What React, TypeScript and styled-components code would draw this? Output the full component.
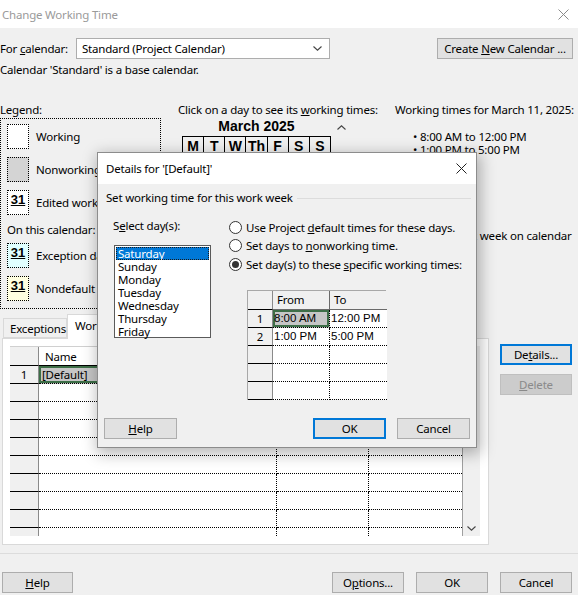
import React from "react";
import styled, { createGlobalStyle, css } from "styled-components";

const UI = `"Noto Sans", "Liberation Sans", sans-serif`;
const ARIAL = `"Liberation Sans", Arial, sans-serif`;
const LS = "-0.2px";

const GlobalStyle = createGlobalStyle`
  html, body { margin: 0; padding: 0; background: #f0f0f0; }
  *, *::before, *::after { box-sizing: border-box; }
  body { font-family: ${UI}; font-size: 11.5px; letter-spacing: ${LS}; color: #000; }
`;

const Window = styled.div`
  position: relative;
  width: 578px;
  height: 595px;
  overflow: hidden;
  background: #f0f0f0;
  display: flex;
  flex-direction: column;
`;

const TitleBar = styled.div<{ $h: number; $dark?: boolean; $pl: number }>`
  flex: none;
  height: ${(p) => p.$h}px;
  background: #fff;
  display: flex;
  align-items: center;
  justify-content: space-between;
  padding: 0 9px 0 ${(p) => p.$pl}px;
  color: ${(p) => (p.$dark ? "#000" : "#9a9a9a")};
`;

const CloseIcon = ({ color }: { color: string }) => (
  <svg width="11" height="11" viewBox="0 0 11 11">
    <path d="M0.5 0.5 L10.5 10.5 M10.5 0.5 L0.5 10.5" stroke={color} strokeWidth="1" fill="none" />
  </svg>
);

const Button = styled.button<{ $w: number; $focus?: boolean }>`
  flex: none;
  width: ${(p) => p.$w}px;
  height: 21px;
  padding: 0;
  font-family: ${UI};
  font-size: 11.5px;
  letter-spacing: ${LS};
  color: #000;
  background: #e1e1e1;
  border: 1px solid #adadad;
  ${(p) =>
    p.$focus &&
    css`
      border: 2px solid #0078d7;
    `}
  &:disabled {
    background: #cccccc;
    border-color: #bfbfbf;
    color: #8a8a8a;
  }
`;

const CalendarRow = styled.div`
  flex: none;
  margin-top: 10px;
  height: 21px;
  display: flex;
  align-items: center;
  padding-right: 5px;
`;

const FieldLabel = styled.div`
  width: 76px;
  flex: none;
`;

const Combo = styled.div`
  width: 254px;
  height: 21px;
  background: #fff;
  border: 1px solid #adadad;
  display: flex;
  align-items: center;
  justify-content: space-between;
  padding: 0 7px 0 5px;
`;

const Chevron = ({ up }: { up?: boolean }) => (
  <svg width="9" height="5" viewBox="0 0 9 5">
    <path d={up ? "M0.5 4.5 L4.5 0.8 L8.5 4.5" : "M0.5 0.5 L4.5 4.2 L8.5 0.5"} stroke="#444" strokeWidth="1.1" fill="none" />
  </svg>
);

const RightButton = styled.div`
  margin-left: auto;
`;

const InfoLine = styled.div`
  flex: none;
  margin-top: 3px;
  line-height: 16px;
`;

const Middle = styled.div`
  flex: none;
  margin-top: 24px;
  height: 212px;
  display: grid;
  grid-template-columns: 178px 217px 1fr;
`;

const Caption = styled.div`
  line-height: 16px;
  white-space: nowrap;
`;

const LegendBox = styled.div`
  width: 161px;
  height: 191px;
  border: 1px dotted #000;
  padding: 5px 0 0 6px;
  display: flex;
  flex-direction: column;
`;

const LegendItem = styled.div<{ $mt: number }>`
  display: flex;
  align-items: center;
  gap: 7px;
  margin-top: ${(p) => p.$mt}px;
  white-space: nowrap;
`;

const Swatch = styled.div<{ $bg: string }>`
  width: 22px;
  height: 25px;
  flex: none;
  border: 1px dotted #000;
  background: ${(p) => p.$bg};
  display: flex;
  justify-content: center;
  align-items: flex-start;
  padding-top: 1px;
  font-family: ${ARIAL};
  font-weight: bold;
  font-size: 13px;
  letter-spacing: 0;
  text-decoration: underline;
`;

const LegendSub = styled.div`
  margin-top: 7px;
  line-height: 16px;
`;

const CalWrap = styled.div`
  margin-left: 4px;
  display: grid;
  grid-template-columns: 149px 18px;
  align-items: center;
`;

const CalTitle = styled.div`
  text-align: center;
  font-family: ${ARIAL};
  font-weight: bold;
  font-size: 14px;
  letter-spacing: 0;
  line-height: 16px;
`;

const ArrowCell = styled.div`
  display: flex;
  justify-content: center;
  padding-left: 2px;
  padding-top: 2px;
`;

const CalTable = styled.table`
  grid-column: 1;
  margin-top: 2px;
  border-collapse: collapse;
  width: 149px;
  table-layout: fixed;
  font-family: ${ARIAL};
  letter-spacing: 0;
  background: #fff;
`;

const CalHead = styled.th`
  border: 1px solid #000;
  height: 18px;
  padding: 0;
  font-size: 14px;
  font-weight: bold;
  background: #f0f0f0;
`;

const CalDay = styled.td<{ $off?: boolean }>`
  border: 1px solid #000;
  height: 18px;
  padding: 0;
  background: ${(p) => (p.$off ? "#d4d4d4" : "#fff")};
`;

const Bullets = styled.div`
  padding-left: 18px;
  margin-top: 12px;
  line-height: 13px;
  white-space: nowrap;
`;

const BasedText = styled.div`
  margin-top: 71px;
  padding-left: 15px;
  line-height: 17px;
  width: 183px;
`;

const TabsSection = styled.div`
  flex: none;
  height: 231px;
  display: flex;
`;

const TabArea = styled.div`
  width: 487px;
  margin-left: 2px;
  display: flex;
  flex-direction: column;
`;

const TabStrip = styled.div`
  height: 24px;
  display: flex;
  align-items: flex-end;
  padding-left: 1px;
  position: relative;
  z-index: 1;
`;

const Tab = styled.div<{ $active?: boolean; $w: number }>`
  width: ${(p) => p.$w}px;
  height: ${(p) => (p.$active ? 25 : 20)}px;
  margin-bottom: ${(p) => (p.$active ? -1 : 0)}px;
  border: 1px solid #d9d9d9;
  border-bottom: ${(p) => (p.$active ? "none" : "1px solid #d9d9d9")};
  background: ${(p) => (p.$active ? "#fff" : "#f0f0f0")};
  display: flex;
  align-items: center;
  padding-left: ${(p) => (p.$active ? 7 : 6)}px;
  padding-bottom: ${(p) => (p.$active ? 3 : 0)}px;
  white-space: nowrap;
`;

const Panel = styled.div`
  flex: 1;
  background: #fff;
  border: 1px solid #d9d9d9;
  padding: 7px 7px 0 7px;
`;

const GridWrap = styled.div`
  display: flex;
  height: 190px;
  overflow: hidden;
`;

const Grid = styled.div`
  display: grid;
  grid-template-columns: 29px 238px 92px 93px;
  grid-auto-rows: 18px;
  grid-template-rows: 19px;
  align-content: start;
  border-top: 1px solid #d0d0d0;
`;

const RowHead = styled.div`
  background: #f0f0f0;
  border-right: 1px solid #8a8a8a;
  border-bottom: 1px solid #000;
  display: flex;
  align-items: center;
  justify-content: center;
`;

const Cell = styled.div<{ $head?: boolean; $sel?: boolean; $last?: boolean }>`
  border-bottom: ${(p) => (p.$head ? "1px solid #000" : "1px dotted #000")};
  border-right: ${(p) => (p.$last ? "none" : p.$head ? "1px solid #8a8a8a" : "1px dotted #000")};
  display: flex;
  align-items: center;
  padding-left: ${(p) => (p.$head ? 6 : 3)}px;
  white-space: nowrap;
  overflow: hidden;
  ${(p) =>
    p.$sel &&
    css`
      background: #c6c6c6;
      box-shadow: inset 0 0 0 2px #3d6e47;
    `}
`;

const ScrollCol = styled.div`
  width: 18px;
  border-left: 1px solid #a0a0a0;
  background: #f0f0f0;
  display: flex;
  flex-direction: column;
  justify-content: flex-end;
  align-items: center;
  padding-bottom: 5px;
`;

const SideButtons = styled.div`
  margin-left: 11px;
  padding-top: 30px;
  display: flex;
  flex-direction: column;
  gap: 9px;
`;

const Separator = styled.div`
  flex: none;
  margin-top: 8px;
  height: 1px;
  background: #dcdcdc;
`;

const Footer = styled.div`
  flex: none;
  margin-top: 18px;
  display: flex;
  gap: 12px;
  padding: 0 6px 0 2px;
`;

const FooterRight = styled.div`
  margin-left: auto;
  display: flex;
  gap: 12px;
`;

/* ---------- Dialog ---------- */

const Dialog = styled.div`
  position: absolute;
  left: 97px;
  top: 152px;
  width: 380px;
  height: 296px;
  background: #f0f0f0;
  border: 1px solid #8c8c8c;
  box-shadow: 2px 4px 14px 2px rgba(0, 0, 0, 0.28);
  display: flex;
  flex-direction: column;
  z-index: 5;
`;

const GroupHeader = styled.div`
  margin-top: 6px;
  padding: 0 5px 0 8px;
  display: flex;
  align-items: center;
  gap: 4px;
  line-height: 16px;
  white-space: nowrap;
`;

const GroupLine = styled.div`
  flex: 1;
  height: 1px;
  background: #dcdcdc;
`;

const DialogContent = styled.div`
  display: grid;
  grid-template-columns: 116px 1fr;
  padding-left: 15px;
  margin-top: 12px;
`;

const DayCol = styled.div`
  display: flex;
  flex-direction: column;
`;

const DayList = styled.div`
  margin-top: 11px;
  margin-left: 1px;
  width: 97px;
  height: 93px;
  background: #fff;
  border: 1px solid #5a5a5a;
  padding: 1px;
  display: flex;
  flex-direction: column;
`;

const DayItem = styled.div<{ $sel?: boolean }>`
  line-height: 13px;
  height: 13px;
  padding-left: 2px;
  ${(p) =>
    p.$sel &&
    css`
      background: #0078d7;
      color: #fff;
      outline: 1px dotted #1a1a1a;
      outline-offset: -1px;
    `}
`;

const OptCol = styled.div`
  display: flex;
  flex-direction: column;
`;

const RadioRow = styled.div`
  height: 18.5px;
  display: flex;
  align-items: center;
  gap: 4px;
  white-space: nowrap;
`;

const RadioDot = styled.span<{ $on?: boolean }>`
  width: 13px;
  height: 13px;
  flex: none;
  border-radius: 50%;
  border: 1px solid #333;
  background: #fff;
  display: flex;
  align-items: center;
  justify-content: center;
  &::after {
    content: "";
    width: 7px;
    height: 7px;
    border-radius: 50%;
    background: ${(p) => (p.$on ? "#333" : "transparent")};
  }
`;

const TimeTable = styled.div`
  margin-top: 16px;
  margin-left: 18px;
  width: 139px;
  display: grid;
  grid-template-columns: 25px 57px 57px;
  grid-template-rows: 19px;
  grid-auto-rows: 18px;
  border-top: 1px solid #a8a8a8;
  border-left: 1px solid #a8a8a8;
  border-right: 1px solid #a8a8a8;
`;

const TRowHead = styled.div`
  border-right: 1px solid #8a8a8a;
  border-bottom: 1px solid #000;
  display: flex;
  align-items: center;
  justify-content: center;
`;

const TCell = styled.div<{ $head?: boolean; $sel?: boolean; $last?: boolean }>`
  border-bottom: ${(p) => (p.$head ? "1px solid #6a6a6a" : "1px dotted #000")};
  border-right: ${(p) => (p.$last ? "none" : p.$head ? "1px solid #6a6a6a" : "1px dotted #000")};
  background: ${(p) => (p.$head ? "#f0f0f0" : "#fff")};
  display: flex;
  align-items: center;
  padding-left: ${(p) => (p.$head ? 4 : 1)}px;
  font-family: ${(p) => (p.$head ? UI : ARIAL)};
  letter-spacing: ${(p) => (p.$head ? LS : "0")};
  white-space: nowrap;
  ${(p) =>
    p.$sel &&
    css`
      background: #c6c6c6;
      box-shadow: inset 0 0 0 2px #3d6e47;
    `}
`;

const DialogFooter = styled.div`
  margin-top: auto;
  padding: 0 6px 8px 6px;
  display: flex;
  justify-content: space-between;
`;

const DialogFooterRight = styled.div`
  display: flex;
  gap: 11px;
`;

const days = ["Saturday", "Sunday", "Monday", "Tuesday", "Wednesday", "Thursday", "Friday"];

const calWeeks = [
  [0, 0, 0, 0, 0, 1, 1],
  [0, 0, 0, 0, 0, 1, 1],
  [0, 0, 0, 0, 0, 1, 1],
  [0, 0, 0, 0, 0, 1, 1],
  [0, 0, 0, 0, 0, 1, 1],
];

const times = [
  ["1", "8:00 AM", "12:00 PM"],
  ["2", "1:00 PM", "5:00 PM"],
  ["", "", ""],
  ["", "", ""],
  ["", "", ""],
];

export default function App() {
  const gridRows = Array.from({ length: 10 }, (_, i) => i);
  return (
    <>
      <GlobalStyle />
      <Window>
        <TitleBar $h={28} $pl={2}>
          <span>Change Working Time</span>
          <CloseIcon color="#8a8a8a" />
        </TitleBar>

        <CalendarRow>
          <FieldLabel>
            For <u>c</u>alendar:
          </FieldLabel>
          <Combo>
            <span>Standard (Project Calendar)</span>
            <Chevron />
          </Combo>
          <RightButton>
            <Button $w={136}>
              Create <u>N</u>ew Calendar ...
            </Button>
          </RightButton>
        </CalendarRow>

        <InfoLine>Calendar 'Standard' is a base calendar.</InfoLine>

        <Middle>
          <div>
            <Caption>Legend:</Caption>
            <LegendBox>
              <LegendItem $mt={0}>
                <Swatch $bg="#fff" />
                <span>Working</span>
              </LegendItem>
              <LegendItem $mt={8}>
                <Swatch $bg="#d4d4d4" />
                <span>Nonworking</span>
              </LegendItem>
              <LegendItem $mt={8}>
                <Swatch $bg="#fff">31</Swatch>
                <span>Edited working hours</span>
              </LegendItem>
              <LegendSub>On this calendar:</LegendSub>
              <LegendItem $mt={5}>
                <Swatch $bg="#e0ffff">31</Swatch>
                <span>Exception day</span>
              </LegendItem>
              <LegendItem $mt={8}>
                <Swatch $bg="#ffffe0">31</Swatch>
                <span>Nondefault work week</span>
              </LegendItem>
            </LegendBox>
          </div>

          <div>
            <Caption>
              Click on a day to see its <u>w</u>orking times:
            </Caption>
            <CalWrap>
              <CalTitle>March 2025</CalTitle>
              <ArrowCell>
                <Chevron up />
              </ArrowCell>
              <CalTable>
                <thead>
                  <tr>
                    {["M", "T", "W", "Th", "F", "S", "S"].map((d, i) => (
                      <CalHead key={i}>{d}</CalHead>
                    ))}
                  </tr>
                </thead>
                <tbody>
                  {calWeeks.map((w, i) => (
                    <tr key={i}>
                      {w.map((d, j) => (
                        <CalDay key={j} $off={d === 1} />
                      ))}
                    </tr>
                  ))}
                </tbody>
              </CalTable>
            </CalWrap>
          </div>

          <div>
            <Caption>Working times for March 11, 2025:</Caption>
            <Bullets>
              <div>• 8:00 AM to 12:00 PM</div>
              <div>• 1:00 PM to 5:00 PM</div>
            </Bullets>
            <BasedText>Default work week on calendar 'Standard'.</BasedText>
          </div>
        </Middle>

        <TabsSection>
          <TabArea>
            <TabStrip>
              <Tab $w={64}>Exceptions</Tab>
              <Tab $w={76} $active>
                Work Weeks
              </Tab>
            </TabStrip>
            <Panel>
              <GridWrap>
                <Grid>
                  <RowHead />
                  <Cell $head>Name</Cell>
                  <Cell $head />
                  <Cell $head $last />
                  {gridRows.map((i) => (
                    <React.Fragment key={i}>
                      <RowHead>{i === 0 ? "1" : ""}</RowHead>
                      <Cell $sel={i === 0}>{i === 0 ? "[Default]" : ""}</Cell>
                      <Cell />
                      <Cell $last />
                    </React.Fragment>
                  ))}
                </Grid>
                <ScrollCol>
                  <Chevron />
                </ScrollCol>
              </GridWrap>
            </Panel>
          </TabArea>
          <SideButtons>
            <Button $w={72} $focus>
              De<u>t</u>ails...
            </Button>
            <Button $w={72} disabled>
              <u>D</u>elete
            </Button>
          </SideButtons>
        </TabsSection>

        <Separator />

        <Footer>
          <Button $w={71}>
            <u>H</u>elp
          </Button>
          <FooterRight>
            <Button $w={72}>
              O<u>p</u>tions...
            </Button>
            <Button $w={72}>OK</Button>
            <Button $w={72}>Cancel</Button>
          </FooterRight>
        </Footer>

        <Dialog>
          <TitleBar $h={31} $pl={8} $dark>
            <span>Details for '[Default]'</span>
            <CloseIcon color="#222" />
          </TitleBar>
          <GroupHeader>
            <span>Set working time for this work week</span>
            <GroupLine />
          </GroupHeader>
          <DialogContent>
            <DayCol>
              <Caption>
                S<u>e</u>lect day(s):
              </Caption>
              <DayList>
                {days.map((d, i) => (
                  <DayItem key={d} $sel={i === 0}>
                    {d}
                  </DayItem>
                ))}
              </DayList>
            </DayCol>
            <OptCol>
              <RadioRow>
                <RadioDot />
                <span>
                  Use Project <u>d</u>efault times for these days.
                </span>
              </RadioRow>
              <RadioRow>
                <RadioDot />
                <span>
                  Set days to <u>n</u>onworking time.
                </span>
              </RadioRow>
              <RadioRow>
                <RadioDot $on />
                <span>
                  Set day(s) to these <u>s</u>pecific working times:
                </span>
              </RadioRow>
              <TimeTable>
                <TRowHead />
                <TCell $head>From</TCell>
                <TCell $head $last>
                  To
                </TCell>
                {times.map((r, i) => (
                  <React.Fragment key={i}>
                    <TRowHead>{r[0]}</TRowHead>
                    <TCell $sel={i === 0}>{r[1]}</TCell>
                    <TCell $last>{r[2]}</TCell>
                  </React.Fragment>
                ))}
              </TimeTable>
            </OptCol>
          </DialogContent>
          <DialogFooter>
            <Button $w={73}>
              <u>H</u>elp
            </Button>
            <DialogFooterRight>
              <Button $w={73} $focus>
                OK
              </Button>
              <Button $w={73}>Cancel</Button>
            </DialogFooterRight>
          </DialogFooter>
        </Dialog>
      </Window>
    </>
  );
}
